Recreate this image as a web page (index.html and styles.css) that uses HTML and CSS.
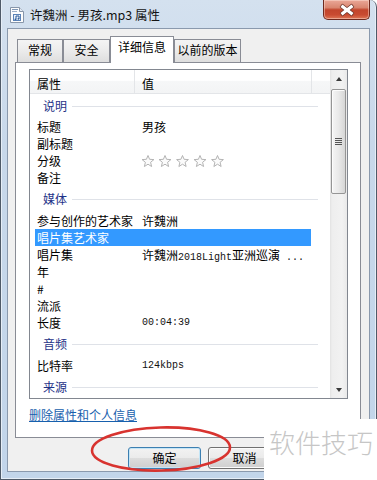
FILE: index.html
```html
<!DOCTYPE html>
<html>
<head>
<meta charset="utf-8">
<link rel="stylesheet" href="styles.css">
</head>
<body>
<div class="window">
  <div class="titlebar">
    <svg class="ticon" width="14" height="16" viewBox="0 0 14 16">
      <path d="M0.5 0.5h9l4 4v11h-13z" fill="#fdfdfd" stroke="#8796aa"/>
      <path d="M9.5 0.5v4h4" fill="#e3eaf3" stroke="#8796aa"/>
      <rect x="2" y="2" width="6" height="1" fill="#7f97b6"/>
      <rect x="2" y="4" width="5" height="1" fill="#9fb2ca"/>
      <rect x="3.5" y="7.5" width="7" height="6" fill="#eef3fa" stroke="#5c84b8"/>
      <path d="M6 12.5V9h3v3" fill="none" stroke="#2d5d9a"/>
      <circle cx="5.4" cy="12.3" r="0.9" fill="#2d5d9a"/>
      <circle cx="8.4" cy="11.8" r="0.9" fill="#2d5d9a"/>
    </svg>
    <span class="title">许魏洲 - 男孩.mp3 属性</span>
    <div class="close">
      <svg class="xicon" width="18" height="14" viewBox="0 0 18 14">
        <g transform="translate(9 7)">
          <g fill="#6b3328" stroke="#6b3328" stroke-width="1.4" stroke-linejoin="round">
            <rect x="-7" y="-1.6" width="14" height="3.2" transform="rotate(38)"/>
            <rect x="-7" y="-1.6" width="14" height="3.2" transform="rotate(-38)"/>
          </g>
          <g fill="#ffffff">
            <rect x="-7" y="-1.6" width="14" height="3.2" transform="rotate(38)"/>
            <rect x="-7" y="-1.6" width="14" height="3.2" transform="rotate(-38)"/>
          </g>
        </g>
      </svg>
    </div>
  </div>
  <div class="client">
    <div class="tabs">
      <div class="tab t1">常规</div>
      <div class="tab t2">安全</div>
      <div class="tab t3 active">详细信息</div>
      <div class="tab t4">以前的版本</div>
    </div>
    <div class="panel">
      <div class="list">
        <div class="listmain">
          <div class="lhead">
            <div class="hc c1">属性</div>
            <div class="hc c2">值</div>
            <div class="hc c3"></div>
          </div>
          <div class="lbody">
            <div class="group first"><span>说明</span><i></i></div>
            <div class="row"><span class="k">标题</span><span class="v">男孩</span></div>
            <div class="row"><span class="k">副标题</span><span class="v"></span></div>
            <div class="row"><span class="k">分级</span><span class="v"><svg class="stars" width="86" height="13" viewBox="0 0 86 13">
                <g fill="#fbfbfb" stroke="#acacac" stroke-width="0.9" stroke-linejoin="round">
                  <path d="M6 0.5L7.6 4.3L11.9 4.6L8.6 7.3L9.6 11.5L6 9.2L2.4 11.5L3.4 7.3L0.1 4.6L4.4 4.3Z"/>
                  <path d="M6 0.5L7.6 4.3L11.9 4.6L8.6 7.3L9.6 11.5L6 9.2L2.4 11.5L3.4 7.3L0.1 4.6L4.4 4.3Z" transform="translate(17 0)"/>
                  <path d="M6 0.5L7.6 4.3L11.9 4.6L8.6 7.3L9.6 11.5L6 9.2L2.4 11.5L3.4 7.3L0.1 4.6L4.4 4.3Z" transform="translate(34.5 0)"/>
                  <path d="M6 0.5L7.6 4.3L11.9 4.6L8.6 7.3L9.6 11.5L6 9.2L2.4 11.5L3.4 7.3L0.1 4.6L4.4 4.3Z" transform="translate(52 0)"/>
                  <path d="M6 0.5L7.6 4.3L11.9 4.6L8.6 7.3L9.6 11.5L6 9.2L2.4 11.5L3.4 7.3L0.1 4.6L4.4 4.3Z" transform="translate(69.5 0)"/>
                </g>
              </svg></span></div>
            <div class="row"><span class="k">备注</span><span class="v"></span></div>
            <div class="group"><span>媒体</span><i></i></div>
            <div class="row"><span class="k">参与创作的艺术家</span><span class="v">许魏洲</span></div>
            <div class="row sel"><span class="k">唱片集艺术家</span><span class="v"></span></div>
            <div class="row"><span class="k">唱片集</span><span class="v">许魏洲<span class="m">2018Light</span>亚洲巡演<span class="m">&nbsp;...</span></span></div>
            <div class="row"><span class="k">年</span><span class="v"></span></div>
            <div class="row"><span class="k">#</span><span class="v"></span></div>
            <div class="row"><span class="k">流派</span><span class="v"></span></div>
            <div class="row"><span class="k">长度</span><span class="v m">00:04:39</span></div>
            <div class="group"><span>音频</span><i></i></div>
            <div class="row"><span class="k">比特率</span><span class="v m">124kbps</span></div>
            <div class="group"><span>来源</span><i></i></div>
          </div>
        </div>
        <div class="scroll">
          <div class="sbtn"><b class="up"></b></div>
          <div class="thumb"><span class="grip"></span></div>
          <div class="track"></div>
          <div class="sbtn"><b class="down"></b></div>
        </div>
      </div>
      <a class="link" href="#">删除属性和个人信息</a>
    </div>
    <div class="buttons">
      <button class="btn default">确定</button>
      <button class="btn">取消</button>
    </div>
  </div>
</div>
<svg class="mark" width="377" height="480" viewBox="0 0 377 480">
  <ellipse cx="161" cy="449" rx="69" ry="21.5" fill="none" stroke="#d8332f" stroke-width="2.6" transform="rotate(-1.5 161 449)"/>
</svg>
<div class="watermark">软件技巧</div>
</body>
</html>
```

FILE: styles.css
```css
* { box-sizing: border-box; margin: 0; padding: 0; }
html, body { width: 377px; height: 480px; overflow: hidden; }
body {
  position: relative;
  background: #fff;
  font-family: "Noto Sans CJK SC", "Noto Sans", sans-serif;
  font-size: 12px;
  color: #000;
}

.window {
  width: 377px;
  height: 480px;
  display: flex;
  flex-direction: column;
  border: 1px solid #4f5a68;
  border-top: none;
  border-top-right-radius: 7px;
  padding: 0 6px 7px;
  background: linear-gradient(180deg, #d4e1ef 0%, #c8d8ea 30%, #c2d5ea 100%);
  box-shadow: inset 1px 0 0 #e6eef7, inset -1px 0 0 #e6eef7, inset 0 -1px 0 #e6eef7;
}

.titlebar {
  height: 28px;
  flex-shrink: 0;
  display: flex;
  align-items: flex-start;
}
.ticon { margin: 7px 0 0 3px; flex-shrink: 0; }
.title {
  margin: 6px 0 0 6px;
  line-height: 18px;
  font-size: 12.5px;
  color: #141414;
}
.close {
  margin-left: auto;
  width: 47px;
  height: 20px;
  flex-shrink: 0;
  border: 1px solid #6e2a1f;
  border-top: none;
  border-radius: 0 0 5px 5px;
  background: linear-gradient(180deg, #eaa898 0%, #d98670 40%, #c2452c 52%, #c94b31 78%, #de7656 100%);
  box-shadow: inset 0 0 0 1px rgba(255, 230, 220, 0.45);
  display: flex;
  align-items: center;
  justify-content: center;
}
.xicon { display: block; flex-shrink: 0; }

.client {
  flex: 1;
  border: 1px solid #8a99ad;
  background: #f0f0f0;
  padding: 7px 8px 0 7px;
  display: flex;
  flex-direction: column;
}

.tabs {
  height: 26px;
  display: flex;
  align-items: flex-end;
  padding-left: 2px;
  position: relative;
  z-index: 1;
  flex-shrink: 0;
}
.tab {
  height: 23px;
  border: 1px solid #898c95;
  border-bottom: none;
  background: linear-gradient(180deg, #f4f4f4 0%, #ebebeb 50%, #dedede 100%);
  line-height: 19px;
  text-align: center;
  font-size: 12px;
  color: #000;
}
.t1 { width: 46px; }
.t2 { width: 47px; }
.t3 { width: 64px; }
.t4 { width: 67px; }
.tab.active {
  height: 27px;
  margin-bottom: -1px;
  background: #fff;
}

.panel {
  height: 376px;
  flex-shrink: 0;
  border: 1px solid #898c95;
  background: #fff;
  padding: 6px 0 0 13px;
}

.list {
  width: 319px;
  height: 330px;
  border: 1px solid #828790;
  display: flex;
}
.listmain {
  flex: 1;
  display: flex;
  flex-direction: column;
  overflow: hidden;
}
.lhead {
  height: 24px;
  flex-shrink: 0;
  display: flex;
  border-bottom: 1px solid #e3e5e8;
  background: linear-gradient(180deg, #ffffff 0%, #ffffff 45%, #f6f7f8 50%, #f3f4f5 100%);
}
.hc {
  padding: 3px 0 0 7px;
  line-height: 21px;
  border-right: 1px solid #e3e5e8;
}
.c1 { width: 105px; }
.c2 { width: 177px; }
.c3 { flex: 1; border-right: none; }

.lbody { flex: 1; overflow: hidden; }

.group {
  height: 26px;
  margin-left: 5px;
  width: 283px;
  display: flex;
  align-items: center;
  padding-left: 8px;
  color: #1e3287;
  line-height: 16px;
}
.group.first { height: 24px; }
.group i {
  flex: 1;
  height: 1px;
  margin-left: 5px;
  background: #dfe2e8;
}

.row {
  height: 17px;
  line-height: 17px;
  margin-left: 5px;
  width: 276px;
  padding-left: 2px;
  display: flex;
  white-space: nowrap;
}
.row .k { width: 105px; flex-shrink: 0; }
.row .v { display: block; }
.row.sel { background: #3399ff; color: #fff; }
.m { font-family: "Liberation Mono", monospace; font-size: 10px; color: #111; }
.stars { display: inline-block; vertical-align: -2px; }

.scroll {
  width: 17px;
  flex-shrink: 0;
  display: flex;
  flex-direction: column;
  background: linear-gradient(90deg, #e2e2e2 0px, #eeeeee 2px, #f2f2f2 12px, #e9e9e9 17px);
}
.sbtn {
  height: 17px;
  flex-shrink: 0;
  display: flex;
  align-items: center;
  justify-content: center;
}
.sbtn b { display: block; width: 0; height: 0; border-left: 3.5px solid transparent; border-right: 3.5px solid transparent; }
.sbtn .up { border-bottom: 4px solid #3a3a3a; }
.sbtn .down { border-top: 4px solid #3a3a3a; }
.thumb {
  margin: 2px 1px 0;
  height: 105px;
  flex-shrink: 0;
  border: 1px solid #959595;
  border-radius: 2px;
  background: linear-gradient(90deg, #f5f5f5 0%, #e9e9e9 50%, #d6d6d6 100%);
  box-shadow: inset 1px 1px 0 #fcfcfc;
  display: flex;
  align-items: center;
  justify-content: center;
}
.grip {
  width: 7px;
  height: 7px;
  background: repeating-linear-gradient(180deg, #555 0, #555 1px, transparent 1px, transparent 2px);
}
.track { flex: 1; }

.link {
  display: inline-block;
  margin-top: 8px;
  line-height: 16px;
  font-size: 12px;
  color: #1760ad;
  text-decoration: underline;
}

.buttons {
  margin-top: 9px;
  display: flex;
  justify-content: flex-end;
  gap: 7px;
  padding-right: 80px;
}
.btn {
  width: 73px;
  height: 22px;
  border: 1px solid #707070;
  border-radius: 3px;
  background: linear-gradient(180deg, #f2f2f2 0%, #ebebeb 49%, #dddddd 50%, #cfcfcf 100%);
  box-shadow: inset 0 0 0 1px #fbfbfb;
  font-family: "Noto Sans CJK SC", "Noto Sans", sans-serif;
  font-size: 12px;
  line-height: 18px;
  color: #000;
}
.btn.default {
  border-color: #3c7fb1;
  box-shadow: inset 0 0 0 1px #c4e5f6;
}

.mark {
  position: absolute;
  left: 0;
  top: 0;
  pointer-events: none;
}
.watermark {
  position: absolute;
  left: 264px;
  top: 419px;
  width: 113px;
  height: 61px;
  background: #fff;
  color: #c6c6c6;
  font-size: 26px;
  font-weight: 300;
  line-height: 30px;
  padding: 8px 0 0 5px;
  white-space: nowrap;
}
```
